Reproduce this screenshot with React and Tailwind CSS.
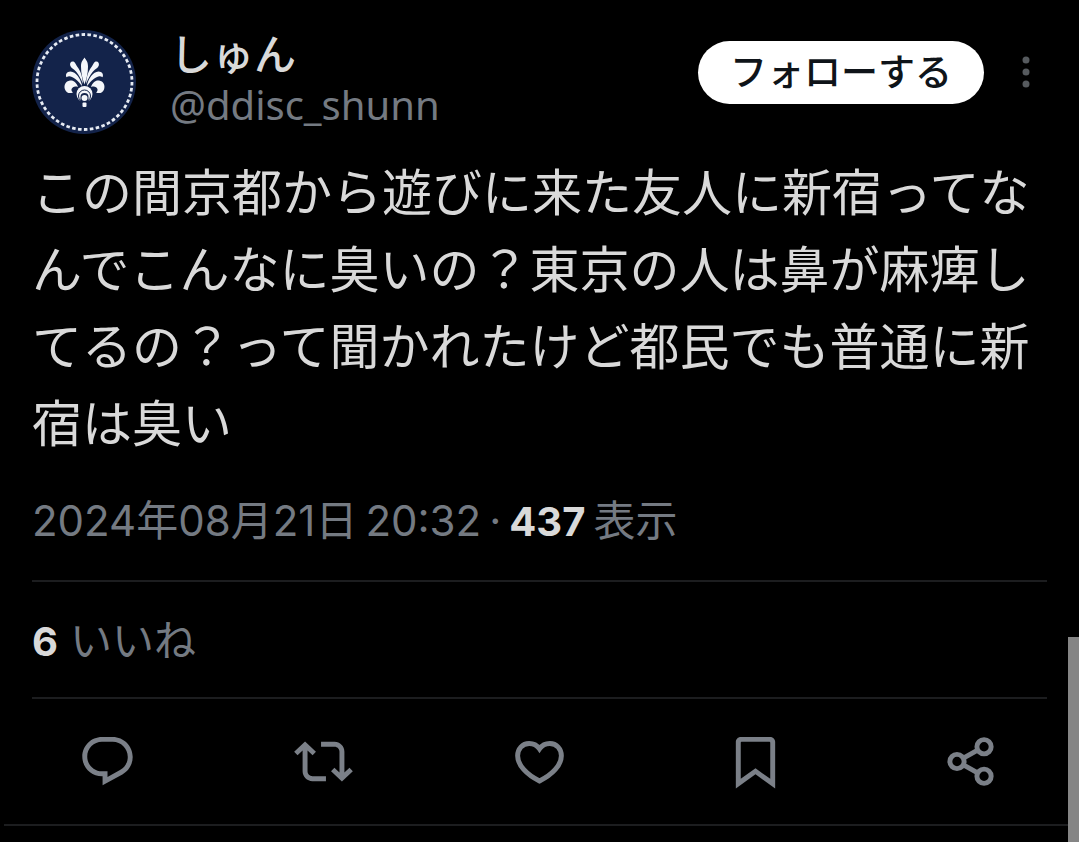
import React from "react";

const post = {
  name: "しゅん",
  handle: "@ddisc_shunn",
  text: "この間京都から遊びに来た友人に新宿ってなんでこんなに臭いの？東京の人は鼻が麻痺してるの？って聞かれたけど都民でも普通に新宿は臭い",
  date: "2024年08月21日",
  time: "20:32",
  views: "437",
  likes: "6",
};

const Avatar = () => (
  <svg viewBox="0 0 104 104" className="size-[104px] shrink-0" aria-hidden="true">
    <circle cx="52" cy="52" r="52" fill="#13234a" />
    <circle
      cx="52.5"
      cy="52"
      r="47.5"
      fill="none"
      stroke="#e6ebf3"
      strokeWidth="2.8"
      pathLength="300"
      strokeDasharray="3.6 2.4"
    />
    <g fill="#f4f6fa">
      <path d="M52.5 27.5c1.5 2.500 3.500 4 3.500 9 0 7-1.500 12-3.500 18-2-6-3.500-11-3.500-18 0-5 2-6.500 3.500-9z" />
      <path d="M51 54c-.5-8-2.500-13-5.500-17-1.500-2-2-4.500-4-5.500-2.500-.6-4 1.500-3.300 4 .8 2.600 3.500 3.500 5.800 6 3 3.500 5 7.500 7 12.500z" />
      <path d="M54 54c.5-8 2.500-13 5.500-17 1.500-2 2-4.500 4-5.500 2.500-.6 4 1.500 3.300 4-.8 2.600-3.500 3.500-5.800 6-3 3.500-5 7.500-7 12.500z" />
      <path d="M50.500 57c-2-9-6.500-15-12-15.500-3.500 0-5.500 3-4 5.800 2.500-1.800 5-1 8.500 1.500 3 2.200 5.500 5 7.500 8.200z" />
      <path d="M54.500 57c2-9 6.500-15 12-15.500 3.500 0 5.500 3 4 5.800-2.500-1.800-5-1-8.500 1.500-3 2.200-5.500 5-7.500 8.200z" />
      <path d="M46 57c-1.500-4.500-4.500-7-8-6.500-4.500.6-6.500 5-5 9 1.200 3.200 4.500 4.500 8 3-2.200-1.500-2-4 0-5.300 1.400-.9 3.200-.7 5-.2z" />
      <path d="M59 57c1.500-4.500 4.500-7 8-6.500 4.500.6 6.500 5 5 9-1.200 3.200-4.500 4.500-8 3 2.200-1.500 2-4 0-5.300-1.400-.9-3.200-.7-5-.2z" />
    </g>
    <circle cx="52.5" cy="64" r="9" fill="#13234a" />
    <circle cx="52.5" cy="64" r="8" fill="#f4f6fa" />
    <circle cx="52.5" cy="66" r="6" fill="none" stroke="#13234a" strokeWidth="1" />
    <path d="M48.500 73v-6a4 4 0 0 1 8 0v6z" fill="#13234a" />
    <circle cx="52.5" cy="68" r="3" fill="#f4f6fa" />
    <rect x="50.5" y="72.5" width="4" height="4.5" rx="1" fill="#f4f6fa" />
  </svg>
);

const actions = [
  {
    label: "返信",
    icon: (
      <path
        fill="currentColor"
        d="M1.751 10c0-4.42 3.584-8 8.005-8h4.366c4.49 0 8.129 3.64 8.129 8.13 0 2.96-1.607 5.68-4.196 7.11l-8.054 4.46v-3.69h-.067c-4.49.1-8.183-3.51-8.183-8.01zm8.005-6c-3.317 0-6.005 2.69-6.005 6 0 3.37 2.77 6.08 6.138 6.01l.351-.01h1.761v2.3l5.087-2.81c1.951-1.08 3.163-3.13 3.163-5.36 0-3.39-2.744-6.13-6.129-6.13H9.756z"
      />
    ),
  },
  {
    label: "リポスト",
    icon: (
      <path
        fill="currentColor"
        d="M4.5 3.88l4.432 4.14-1.364 1.46L5.5 7.55V16c0 1.1.896 2 2 2H13v2H7.5c-2.209 0-4-1.79-4-4V7.55L1.432 9.48.068 8.02 4.5 3.88zM16.5 6H11V4h5.5c2.209 0 4 1.79 4 4v8.45l2.068-1.93 1.364 1.46-4.432 4.14-4.432-4.14 1.364-1.46 2.068 1.93V8c0-1.1-.896-2-2-2z"
      />
    ),
  },
  {
    label: "いいね",
    icon: (
      <path
        fill="none"
        stroke="currentColor"
        strokeWidth="2"
        d="M12 6.9C10.9 5.3 9.3 4.7 7.8 4.7 5 4.7 3.1 7 3.1 9.7c0 3.7 3.6 7.6 8.9 10.2 5.3-2.6 8.9-6.5 8.9-10.2 0-2.7-1.9-5-4.7-5-1.5 0-3.1.6-4.2 2.2z"
      />
    ),
  },
  {
    label: "ブックマーク",
    icon: (
      <path
        fill="currentColor"
        d="M4 4c0-1.1.9-2 2-2h12c1.1 0 2 .9 2 2v18.94l-8-5.71-8 5.71V4zm2.4 0c-.2 0-.4.2-.4.4v14.66l6-4.29 6 4.29V4.4c0-.2-.2-.4-.4-.4H6.4z"
      />
    ),
  },
  {
    label: "共有",
    icon: (
      <g fill="none" stroke="currentColor" strokeWidth="2">
        <circle cx="6.1" cy="12" r="2.9" />
        <circle cx="17.1" cy="6" r="2.9" />
        <circle cx="17.1" cy="18" r="2.9" />
        <path d="M8.7 10.6l5.8-3.2M8.7 13.4l5.8 3.2" />
      </g>
    ),
  },
];

const App = () => {
  return (
    <main
      lang="ja"
      className="min-h-screen bg-black font-['Inter','Noto_Sans_CJK_JP',sans-serif] text-[#d9d9d9]"
    >
      <article>
        <header className="flex items-start pt-[30px] pr-[47px] pl-8">
          <Avatar />
          <div className="ml-[34px] min-w-0 flex-1">
            <p className="h-[50px] text-[42px] leading-[50px] font-medium">{post.name}</p>
            <p className="font-['Noto_Sans',sans-serif] text-[40px] leading-[50px] text-[#747a82]">
              {post.handle}
            </p>
          </div>
          <button
            type="button"
            className="mt-[11px] h-[63px] rounded-full bg-white px-8 text-[37px] leading-[63px] font-medium text-[#0f1419]"
          >
            フォローする
          </button>
          <button type="button" aria-label="もっと見る" className="mt-[22px] ml-9">
            <svg viewBox="0 0 12 40" className="h-10 w-3" fill="#565a5e">
              <circle cx="6" cy="8" r="3.5" />
              <circle cx="6" cy="20" r="3.5" />
              <circle cx="6" cy="32" r="3.5" />
            </svg>
          </button>
        </header>

        <div className="px-8">
          <p className="mt-[21px] text-[50px] leading-[77px] break-all">{post.text}</p>

          <p className="mt-[22px] flex flex-wrap items-baseline gap-x-2 text-[42px] leading-[72px] text-[#747a82]">
            <span>{post.date}</span>
            <span>{post.time}</span>
            <span>·</span>
            <strong className="text-[40px] font-bold text-[#d9d9d9]">{post.views}</strong>
            <span>表示</span>
          </p>

          <p className="mt-[22px] flex items-baseline gap-x-3 border-y-2 border-[#1c1d1f] pt-[23px] pb-[19px] text-[42px] leading-[72px] text-[#747a82]">
            <strong className="text-[40px] font-bold text-[#d9d9d9]">{post.likes}</strong>
            <span>いいね</span>
          </p>
        </div>

        {/* Actions */}
        <div className="flex py-[33px] text-[#7b8088]">
          {actions.map((item) => (
            <button
              key={item.label}
              type="button"
              aria-label={item.label}
              className="flex flex-1 justify-center"
            >
              <svg viewBox="0 0 24 24" className="size-[59px]">
                {item.icon}
              </svg>
            </button>
          ))}
        </div>
        <hr className="ml-1 border-t-2 border-[#1c1d1f]" />
      </article>

      {/* Scroll thumb */}
      <div className="fixed right-0 bottom-0 h-[205px] w-[11px] bg-[#858585]" />
    </main>
  );
};

export default App;
